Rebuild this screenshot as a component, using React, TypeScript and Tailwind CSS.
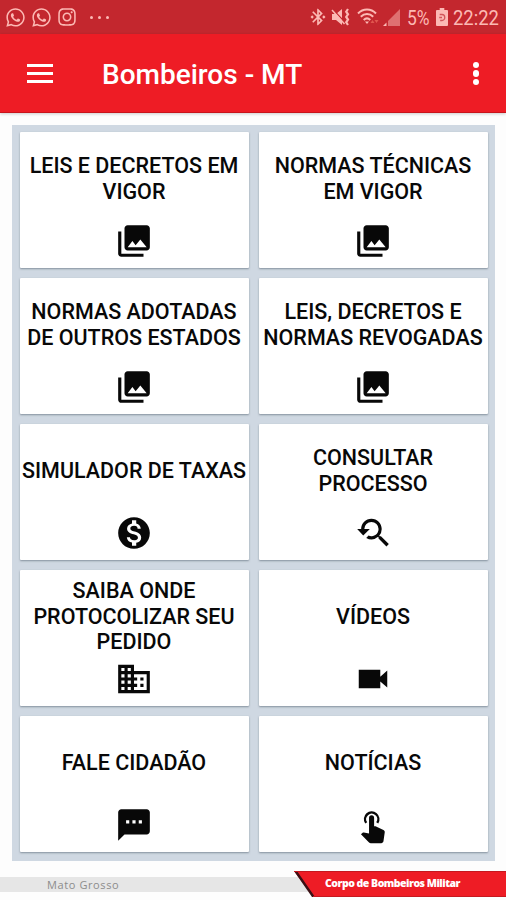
import type { ReactNode } from "react";
import { FaInstagram, FaWhatsapp } from "react-icons/fa";
import {
  MdBluetoothConnected,
  MdDomain,
  MdMonetizationOn,
  MdPhotoLibrary,
  MdTextsms,
  MdYoutubeSearchedFor,
} from "react-icons/md";

const menuItems: { lines: string[]; icon: ReactNode }[] = [
  { lines: ["LEIS E DECRETOS EM", "VIGOR"], icon: <MdPhotoLibrary size={38} /> },
  { lines: ["NORMAS TÉCNICAS", "EM VIGOR"], icon: <MdPhotoLibrary size={38} /> },
  { lines: ["NORMAS ADOTADAS", "DE OUTROS ESTADOS"], icon: <MdPhotoLibrary size={38} /> },
  { lines: ["LEIS, DECRETOS E", "NORMAS REVOGADAS"], icon: <MdPhotoLibrary size={38} /> },
  { lines: ["SIMULADOR DE TAXAS"], icon: <MdMonetizationOn size={38} /> },
  { lines: ["CONSULTAR", "PROCESSO"], icon: <MdYoutubeSearchedFor size={38} /> },
  { lines: ["SAIBA ONDE", "PROTOCOLIZAR SEU", "PEDIDO"], icon: <MdDomain size={38} /> },
  { lines: ["VÍDEOS"], icon: <VideoIcon /> },
  { lines: ["FALE CIDADÃO"], icon: <MdTextsms size={38} /> },
  { lines: ["NOTÍCIAS"], icon: <TouchIcon /> },
];

function VideoIcon() {
  return (
    <svg width="38" height="38" viewBox="0 0 24 24" fill="currentColor">
      <path d="M3 6.2h13.6v4.3L21 6.7v10.6l-4.4-3.8v4.3H3z" />
    </svg>
  );
}

function TouchIcon() {
  return (
    <svg width="38" height="38" viewBox="0 0 24 24" fill="currentColor">
      <path d="M7.7 10.7a4.2 4.2 0 1 1 7-.1" fill="none" stroke="currentColor" strokeWidth="1.5" />
      <path d="M9.5 7.5a1.6 1.6 0 0 1 3.2 0v5.3h.9l5 2.4c.6.3.9.8.8 1.5l-.8 5.6c-.1.7-.7 1.2-1.4 1.2h-6.6c-.4 0-.8-.2-1.1-.5l-5.1-5.1.9-.9c.2-.2.5-.3.9-.3l3.3.7z" />
    </svg>
  );
}

function MuteIcon() {
  return (
    <svg width="20" height="18" viewBox="0 0 20 18" fill="none" stroke="currentColor">
      <path d="M1 6h4l6-5v16l-6-5H1z" fill="currentColor" stroke="none" />
      <path d="M2 1.5l12 13" stroke="#c3272e" strokeWidth="1.3" />
      <path d="M1 2l12.5 14" strokeWidth="1.5" />
      <path d="M17 1l-1.8 2.7L17 6.3 15.2 9l1.8 2.6-1.8 2.7L17 17" strokeWidth="2.2" />
    </svg>
  );
}

function WifiIcon() {
  return (
    <svg width="22" height="18" viewBox="0 0 22 18" fill="none" stroke="currentColor">
      <path d="M1 5.5c5-5.3 13-5.3 18 0M3.8 8.8c3.6-3.6 8.8-3.6 12.4 0M6.7 12c2-2 4.6-2 6.6 0" strokeWidth="2" />
      <path d="M8 13.6h4l-2 2.4z" fill="currentColor" stroke="none" />
      <path d="M13.5 15l2-3 2 3zM17.5 12h4l-2 3z" fill="#e0574f" stroke="none" />
    </svg>
  );
}

function SignalIcon() {
  return (
    <svg width="17" height="17" viewBox="0 0 17 17" fill="currentColor">
      <path d="M17 0v17H5V12z" opacity="0.5" />
      <path d="M3.5 13.5V17H0z" />
    </svg>
  );
}

function BatteryIcon() {
  return (
    <svg width="12" height="18" viewBox="0 0 13 18" preserveAspectRatio="none">
      <path d="M4 0h5v2h3a1 1 0 0 1 1 1v14a1 1 0 0 1-1 1H1a1 1 0 0 1-1-1V3a1 1 0 0 1 1-1h3z" fill="currentColor" />
      <path d="M4 6.5h2.5a3 3 0 0 1 0 6H4.5M3.5 9.5h3" fill="none" stroke="#d2555a" strokeWidth="1.4" />
    </svg>
  );
}

function StatusBar() {
  return (
    <div className="flex h-[34px] items-center justify-between bg-[#c3272e] pl-[5px] pr-[7px] text-[#fcb9b4]">
      <div className="flex items-center">
        <FaWhatsapp size={21} />
        <FaWhatsapp size={21} className="ml-[5px]" />
        <FaInstagram size={20} className="ml-[5px]" />
        <div className="ml-[13px] flex gap-[5px]">
          <span className="size-[3px] rounded-full bg-current" />
          <span className="size-[3px] rounded-full bg-current" />
          <span className="size-[3px] rounded-full bg-current" />
        </div>
      </div>
      <div className="flex items-center">
        <MdBluetoothConnected size={20} />
        <span className="ml-[3px]"><MuteIcon /></span>
        <span className="ml-[6px]"><WifiIcon /></span>
        <span className="ml-[4px]"><SignalIcon /></span>
        <span className="ml-[7px] w-[24px] whitespace-nowrap pt-[2px] text-[20px] leading-none">
          <span className="inline-block origin-left scale-x-[0.87]">5%</span>
        </span>
        <span className="ml-[5px]"><BatteryIcon /></span>
        <span className="ml-[5px] w-[46px] whitespace-nowrap pt-[2px] text-[20.5px] leading-none">
          <span className="inline-block origin-left scale-x-[0.9]">22:22</span>
        </span>
      </div>
    </div>
  );
}

function AppBar() {
  return (
    <header className="flex h-[79px] items-center border-b border-[#c8141b] bg-[#ee1c25] pl-[27px] pr-[27px] text-white shadow-[0_1px_3px_rgba(0,0,0,0.2)]">
      <button className="flex w-[26px] flex-col gap-[5px] pt-px">
        <span className="h-[3px] w-full bg-white" />
        <span className="h-[3px] w-full bg-white" />
        <span className="h-[3px] w-full bg-white" />
      </button>
      <h1 className="ml-[49px] flex-1 pt-[4px] text-[28px] font-medium leading-none">Bombeiros - MT</h1>
      <button className="flex flex-col gap-[2px] pt-px">
        <span className="size-[6.5px] rounded-full bg-white" />
        <span className="size-[6.5px] rounded-full bg-white" />
        <span className="size-[6.5px] rounded-full bg-white" />
      </button>
    </header>
  );
}

function MenuCard({ lines, icon }: { lines: string[]; icon: ReactNode }) {
  return (
    <button className="flex h-[136px] flex-col items-center rounded-[1px] bg-white pr-px text-[#080808] shadow-[0_1px_2px_rgba(60,75,90,0.5)]">
      <span className="flex h-[90px] flex-col justify-center whitespace-nowrap pt-[3px] text-center text-[21.5px] font-medium leading-[25.4px]">
        {lines.map((line) => (
          <span key={line}>{line}</span>
        ))}
      </span>
      {icon}
    </button>
  );
}

function Footer() {
  return (
    <footer className="mt-[9px] flex h-[29px] items-start">
      <div className="-mr-[14px] mt-[7px] flex h-[15px] flex-1 items-center bg-[#e6e6e6] pl-[47px]">
        <span className="font-['Open_Sans',sans-serif] text-[11px] leading-none tracking-[0.6px] text-[#8c8c8c]">Mato Grosso</span>
      </div>
      <div className="relative mt-[1px] h-[26px] w-[212px]">
        <svg className="absolute inset-0" width="212" height="26" viewBox="0 0 212 26">
          <path d="M0 0h212v26H19z" fill="#ee1c25" />
          <path d="M0 0h3l18 26h-3z" fill="#3a1014" />
          <path d="M0 .5h212M19 25.5h193" stroke="#c5181f" />
        </svg>
        <span className="relative block whitespace-nowrap pl-[31px] font-['Open_Sans',sans-serif] text-[10.5px] font-extrabold leading-[24px] tracking-[-0.5px] text-white">
          Corpo de Bombeiros Militar
        </span>
      </div>
    </footer>
  );
}

export default function App() {
  return (
    <div className="flex h-[900px] w-[506px] flex-col overflow-hidden bg-[#fdfdfd] font-['Roboto',sans-serif]">
      <StatusBar />
      <AppBar />
      <main className="ml-[12px] mt-[12px] grid h-[736px] w-[483px] grid-cols-[229px_229px] content-start gap-[10px] bg-[#cfd8e2] pl-[8px] pt-[7px]">
        {menuItems.map((item) => (
          <MenuCard key={item.lines[0]} {...item} />
        ))}
      </main>
      <Footer />
    </div>
  );
}
